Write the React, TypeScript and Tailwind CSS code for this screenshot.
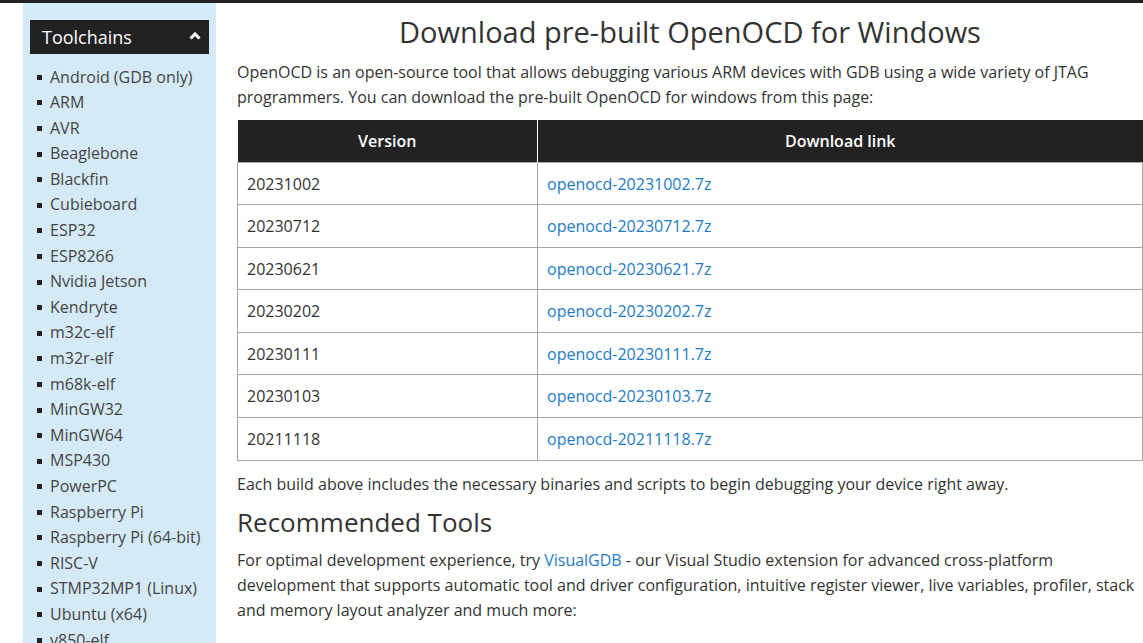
const toolchains = [
  "Android (GDB only)",
  "ARM",
  "AVR",
  "Beaglebone",
  "Blackfin",
  "Cubieboard",
  "ESP32",
  "ESP8266",
  "Nvidia Jetson",
  "Kendryte",
  "m32c-elf",
  "m32r-elf",
  "m68k-elf",
  "MinGW32",
  "MinGW64",
  "MSP430",
  "PowerPC",
  "Raspberry Pi",
  "Raspberry Pi (64-bit)",
  "RISC-V",
  "STMP32MP1 (Linux)",
  "Ubuntu (x64)",
  "v850-elf",
];

const builds = [
  "20231002",
  "20230712",
  "20230621",
  "20230202",
  "20230111",
  "20230103",
  "20211118",
];

function Sidebar() {
  return (
    <aside className="w-[193px] shrink-0 bg-[#d4eaf7] px-[7px] pt-[17px]">
      <div className="flex h-[34px] items-center justify-between bg-[#222222] pl-[12px] pr-[8px]">
        <span className="text-[18px] text-white">Toolchains</span>
        <svg width="12" height="8" viewBox="0 0 12 8" className="mb-[2px]">
          <path
            d="M1.5 6.5 L6 2 L10.5 6.5"
            fill="none"
            stroke="white"
            strokeWidth="3"
            strokeLinejoin="miter"
          />
        </svg>
      </div>
      <ul className="mt-[10.5px] pl-[7px]">
        {toolchains.map((name) => (
          <li key={name} className="flex items-center text-[16px] leading-[25.6px] text-[#444]">
            <span className="mr-[8px] h-[5px] w-[5px] shrink-0 bg-[#222]" />
            <span>{name}</span>
          </li>
        ))}
      </ul>
    </aside>
  );
}

export default function App() {
  return (
    <div className="h-[643px] overflow-hidden bg-white font-['Open_Sans',sans-serif] text-[#333]">
      <div className="h-[3px] bg-[#222]" />
      <div className="flex h-[640px] pl-[23px]">
        <Sidebar />
        <main className="ml-[21px] w-[906px] shrink-0">
          <h1 className="mt-[10.5px] text-center text-[29px] leading-[35px] text-[#333]">
            Download pre-built OpenOCD for Windows
          </h1>
          <p className="mt-[11px] text-[16px] leading-[25px]">
            OpenOCD is an open-source tool that allows debugging various ARM devices with GDB using a
            wide variety of JTAG programmers. You can download the pre-built OpenOCD for windows from
            this page:
          </p>
          <table className="mt-[10.5px] w-full border-collapse text-[16px]">
            <thead>
              <tr className="bg-[#222] text-white">
                <th className="h-[42px] w-[300px] border-r border-white font-semibold">Version</th>
                <th className="h-[42px] font-semibold">Download link</th>
              </tr>
            </thead>
            <tbody>
              {builds.map((v) => (
                <tr key={v}>
                  <td className="border border-[#a5a5a5] px-[9px] pt-[9px] pb-[7px] leading-[25.6px]">{v}</td>
                  <td className="border border-[#a5a5a5] px-[9px] pt-[9px] pb-[7px] leading-[25.6px]">
                    <a href="#" className="text-[#1e7bc6]">
                      openocd-{v}.7z
                    </a>
                  </td>
                </tr>
              ))}
            </tbody>
          </table>
          <p className="mt-[11.5px] text-[16px] leading-[25px]">
            Each build above includes the necessary binaries and scripts to begin debugging your device
            right away.
          </p>
          <h2 className="mt-[10px] text-[26px] leading-[31px]">Recommended Tools</h2>
          <p className="mt-[10px] text-[16px] leading-[25px]">
            For optimal development experience, try{" "}
            <a href="#" className="text-[#1e7bc6]">
              VisualGDB
            </a>{" "}
            - our Visual Studio extension for advanced cross-platform development that supports
            automatic tool and driver configuration, intuitive register viewer, live variables,
            profiler, stack and memory layout analyzer and much more:
          </p>
        </main>
      </div>
    </div>
  );
}
